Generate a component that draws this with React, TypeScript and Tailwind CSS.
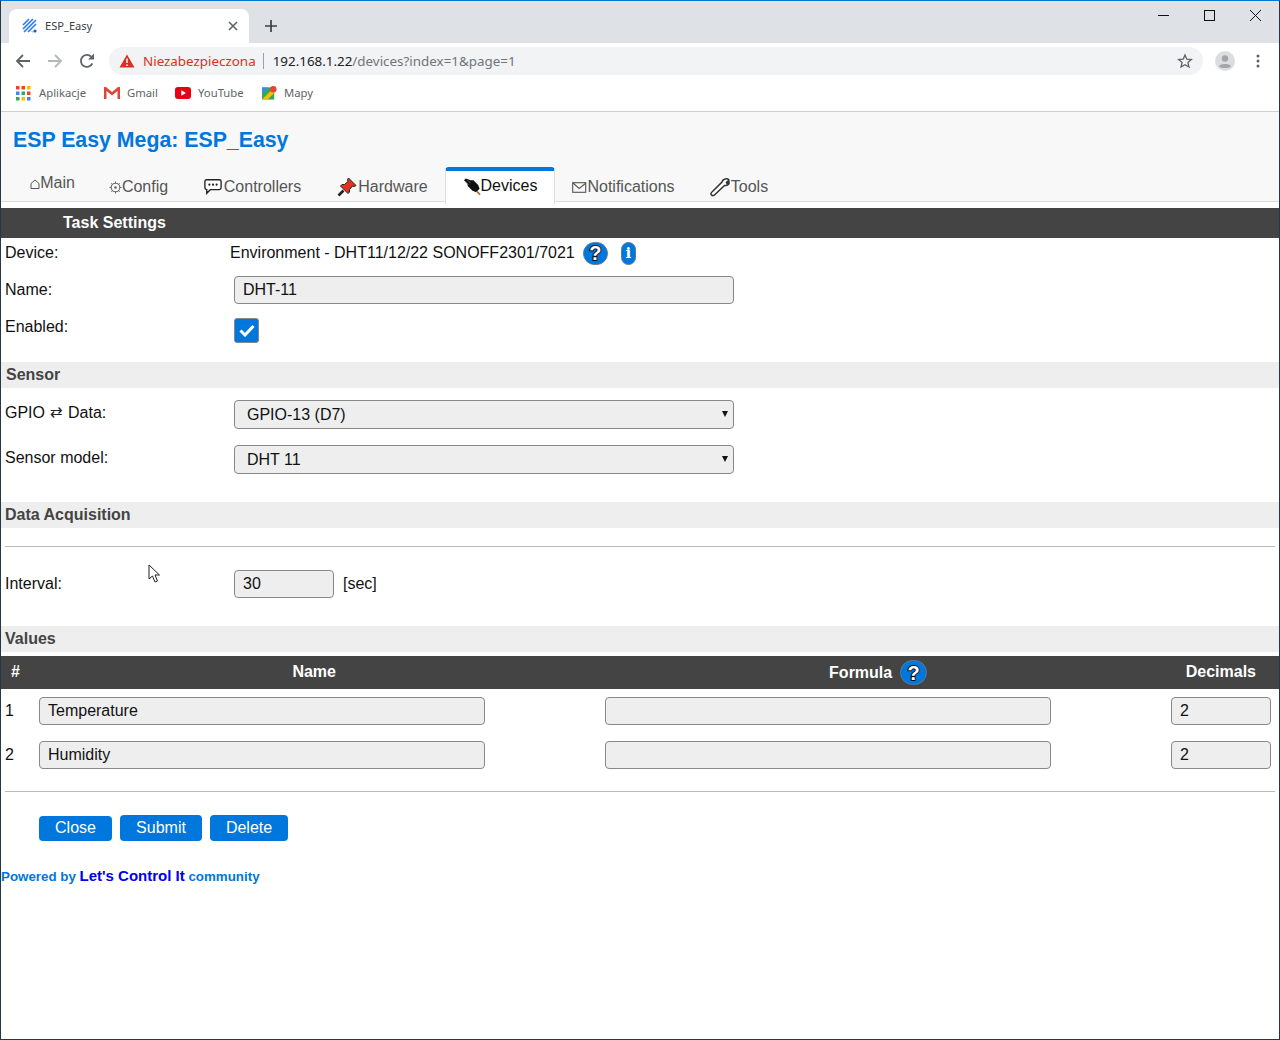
import React from "react";

const Q = ({ size = "w-[25px] h-[23px]", className = "" }: { size?: string; className?: string }) => (
  <span className={`flex items-center justify-center shrink-0 ${size} rounded-full bg-[#0077dd] border border-[#5a7a94] text-white font-bold text-[20px] leading-none ${className}`} style={{ WebkitTextStroke: "2px #111", paintOrder: "stroke fill" }}>?</span>
);

const Field = ({ w, value = "", select = false, h = "h-[29px]", px = "pl-2" }: { w: string; value?: string; select?: boolean; h?: string; px?: string }) => (
  <div className={`${w} ${h} ${px} relative flex items-center shrink-0 rounded-[4px] border border-[#888] bg-[#eeeeee] text-[16px] text-[#111]`}>
    {value}
    {select && <span className="absolute right-[5px] top-[10px] w-0 h-0 border-x-[3px] border-x-transparent border-t-[6px] border-t-[#111]" />}
  </div>
);

const Section = ({ children, pl = "pl-[4px]" }: { children: React.ReactNode; pl?: string }) => (
  <div className={`h-[26px] ${pl} flex items-center bg-[#eeeeee] font-bold text-[16px] text-[#444]`}>{children}</div>
);

const Tab = ({ icon, label, active = false, w, up = false }: { icon: React.ReactNode; label: string; active?: boolean; w: string; up?: boolean }) => {
  const state = active
    ? "mt-[4px] h-[37px] pb-[3px] bg-white text-[#111] border-x border-[#ddd] border-t-[4px] border-t-[#0077dd] rounded-t-[4px] relative z-10"
    : up
      ? "h-[38px] pt-[3px] pb-[2px] text-[#555]"
      : "h-[38px] pt-[9px] text-[#555]";
  return (
    <div className={`${w} ${state} flex items-center justify-center shrink-0 text-[16px]`}>
      <span className="flex items-center">{icon}{label}</span>
    </div>
  );
};

const Bookmark = ({ icon, label, w }: { icon: React.ReactNode; label: string; w: string }) => (
  <div className={`${w} flex items-center gap-[7px] text-[11.3px] text-[#5f6368] shrink-0`}>
    {icon}<span>{label}</span>
  </div>
);

export default function App() {
  return (
    <div className="w-[1280px] h-[1040px] relative flex flex-col bg-white border-x border-b border-x-[#24384a] border-b-[#24384a] border-t border-t-[#0078d4] overflow-hidden" style={{ fontFamily: '"Liberation Sans", Arial, sans-serif' }}>
      {/* tab strip */}
      <div className="h-[42px] shrink-0 bg-[#dee1e6] flex items-end pl-[8px] relative">
        <div className="w-[240px] h-[34px] bg-white rounded-t-[8px] flex items-center pl-[13px] pr-[11px] text-[11.1px] text-[#3c4043]" style={{ fontFamily: '"Noto Sans", sans-serif' }}>
          <svg width="16" height="16" viewBox="0 0 16 16" className="mr-[7px] shrink-0">
            <path d="M1 7 L7 1 M1 11 L11 1 M2 14 L14 2 M6 14 L14 6 M10 14 L10.5 13.5" stroke="#2b7de0" strokeWidth="1.6" fill="none" />
            <circle cx="13" cy="13" r="1.6" fill="#0b5fc6" />
          </svg>
          <span className="flex-1">ESP_Easy</span>
          <svg width="10" height="10" viewBox="0 0 10 10"><path d="M1 1 L9 9 M9 1 L1 9" stroke="#5f6368" strokeWidth="1.6" /></svg>
        </div>
        <svg width="12" height="12" viewBox="0 0 12 12" className="ml-[16px] mb-[11px]"><path d="M6 0 V12 M0 6 H12" stroke="#3c4043" strokeWidth="1.7" /></svg>
        <div className="absolute right-[18px] top-[9px] flex items-center gap-[35px]">
          <svg width="11" height="11" viewBox="0 0 11 11"><path d="M0 5.5 H11" stroke="#111" strokeWidth="1" /></svg>
          <svg width="11" height="11" viewBox="0 0 11 11"><rect x="0.5" y="0.5" width="10" height="10" fill="none" stroke="#111" /></svg>
          <svg width="11" height="11" viewBox="0 0 11 11"><path d="M0 0 L11 11 M11 0 L0 11" stroke="#111" /></svg>
        </div>
      </div>
      {/* toolbar */}
      <div className="h-[36px] shrink-0 flex items-center pl-[14px] pr-[14px]">
        <svg width="16" height="16" viewBox="0 0 16 16" className="shrink-0"><path d="M15 8 H2 M8 2 L2 8 L8 14" fill="none" stroke="#5f6368" strokeWidth="1.8" /></svg>
        <svg width="16" height="16" viewBox="0 0 16 16" className="ml-[16px] shrink-0"><path d="M1 8 H14 M8 2 L14 8 L8 14" fill="none" stroke="#b4b7bb" strokeWidth="1.8" /></svg>
        <svg width="16" height="16" viewBox="0 0 16 16" className="ml-[16px] shrink-0"><path d="M13.3 10.5 A6 6 0 1 1 12.2 3.7" fill="none" stroke="#5f6368" strokeWidth="1.8" /><path d="M9 6.5 H15 V0.5 Z" fill="#5f6368" /></svg>
        <div className="ml-[14px] w-[1094px] h-[28px] rounded-full bg-[#f1f3f4] flex items-center pl-[10px] pr-[10px] text-[13.4px] shrink-0" style={{ fontFamily: '"Noto Sans", sans-serif' }}>
          <svg width="16" height="14" viewBox="0 0 16 14" className="shrink-0"><path d="M8 0.5 L15.5 13.5 H0.5 Z" fill="#d93025" /><path d="M8 4.5 V9 M8 10.5 V12" stroke="#fff" strokeWidth="1.5" /></svg>
          <span className="ml-[8px] pt-px text-[#d93025]">Niezabezpieczona</span>
          <span className="ml-[7px] w-px h-[16px] bg-[#9aa0a6]" />
          <span className="ml-[9px] pt-px text-[#202124]">192.168.1.22<span className="text-[#70757a]">/devices?index=1&amp;page=1</span></span>
          <svg width="16" height="16" viewBox="0 0 24 24" className="ml-auto shrink-0"><path d="M12 3 L14.7 9.3 L21.5 9.9 L16.4 14.4 L17.9 21 L12 17.5 L6.1 21 L7.6 14.4 L2.5 9.9 L9.3 9.3 Z" fill="none" stroke="#5f6368" strokeWidth="2" /></svg>
        </div>
        <div className="ml-[12px] w-[20px] h-[20px] rounded-full bg-[#dcdddf] relative overflow-hidden shrink-0">
          <svg width="20" height="20" viewBox="0 0 20 20"><circle cx="10" cy="7.5" r="3.2" fill="#a3a5a8" /><path d="M4 15.5 C4 12 16 12 16 15.5 C14 17.5 6 17.5 4 15.5 Z" fill="#a3a5a8" /></svg>
        </div>
        <svg width="4" height="14" viewBox="0 0 4 14" className="ml-[21px] shrink-0"><circle cx="2" cy="2" r="1.5" fill="#5f6368" /><circle cx="2" cy="7" r="1.5" fill="#5f6368" /><circle cx="2" cy="12" r="1.5" fill="#5f6368" /></svg>
      </div>
      {/* bookmarks */}
      <div className="h-[33px] shrink-0 flex items-center pl-[15px] pb-[4px] border-b border-b-[#cfcfcf]" style={{ fontFamily: '"Noto Sans", sans-serif' }}>
        <Bookmark w="w-[88px]" label="Aplikacje" icon={
          <svg width="15" height="15" viewBox="0 0 15 15" className="mr-px">
            {[["#ea4335", "#ea4335", "#fbbc04"], ["#4285f4", "#34a853", "#ea4335"], ["#34a853", "#fbbc04", "#4285f4"]].map((row, y) => row.map((c, x) => <rect key={`${x}${y}`} x={x * 5.5} y={y * 5.5} width="3.5" height="3.5" fill={c} />))}
          </svg>} />
        <Bookmark w="w-[71px]" label="Gmail" icon={
          <svg width="16" height="12" viewBox="0 0 16 12"><path d="M0 0 H2 L8 5 L14 0 H16 V12 H13.5 V4 L8 8.5 L2.5 4 V12 H0 Z" fill="#d9473d" /></svg>} />
        <Bookmark w="w-[87px]" label="YouTube" icon={
          <svg width="16" height="12" viewBox="0 0 16 12"><rect width="16" height="12" rx="3" fill="#e60012" /><path d="M6.3 3.3 L11 6 L6.3 8.7 Z" fill="#fff" /></svg>} />
        <Bookmark w="w-[70px]" label="Mapy" icon={
          <svg width="15" height="16" viewBox="0 0 16 16"><rect y="2" width="13" height="13" fill="#34a853" /><path d="M0 15 L13 2 V8 L6 15 Z" fill="#fbbc04" /><path d="M0 2 H7 L0 9 Z" fill="#4285f4" /><circle cx="12" cy="4" r="3.5" fill="#ea4335" /></svg>} />
      </div>
      {/* page header */}
      <div className="h-[90px] shrink-0 bg-[#f8f8f8] relative flex flex-col">
        <h1 className="pl-[12px] pt-[16px] h-[51px] text-[21.3px] leading-[25px] font-bold text-[#0077dd] shrink-0">ESP Easy Mega: ESP_Easy</h1>
        <div className="h-[39px] flex border-b border-b-[#dddddd] pl-[12px] text-[#555]">
          <Tab w="w-[79px]" up label="Main" icon={
            <svg width="10" height="10" viewBox="0 0 10 10" className="mt-[3px]"><path d="M1 9.5 V4.5 L5 1 L9 4.5 V9.5 Z" fill="none" stroke="#555" /></svg>} />
          <Tab w="w-[93px]" label="Config" icon={
            <svg width="13" height="13" viewBox="0 0 13 13" className="mt-px"><circle cx="6.5" cy="6.5" r="4.3" fill="none" stroke="#666" strokeWidth="1.1" /><circle cx="6.5" cy="6.5" r="1.3" fill="#666" /><path d="M6.5 0.5 V2 M6.5 11 V12.5 M0.5 6.5 H2 M11 6.5 H12.5 M2.3 2.3 L3.3 3.3 M9.7 9.7 L10.7 10.7 M10.7 2.3 L9.7 3.3 M3.3 9.7 L2.3 10.7" stroke="#666" /></svg>} />
          <Tab w="w-[135px]" label="Controllers" icon={
            <svg width="18" height="17" viewBox="0 0 20 17" className="mr-[2px]"><path d="M3 1 H17 Q19 1 19 3 V10 Q19 12 17 12 H7 L3 16 V12 Q1 12 1 10 V3 Q1 1 3 1 Z" fill="#fff" stroke="#222" strokeWidth="1.5" /><circle cx="6" cy="6.5" r="1.2" fill="#222" /><circle cx="10" cy="6.5" r="1.2" fill="#222" /><circle cx="14" cy="6.5" r="1.2" fill="#222" /></svg>} />
          <Tab w="w-[125px]" label="Hardware" icon={
            <svg width="20" height="20" viewBox="0 0 20 20" className="mr-px"><path d="M11.5 1 L19 8.5 L17 9.5 L15.5 9 L12.5 12.5 L12.5 15 L11 16.5 L3.5 9 L5 7.5 L7.5 7.5 L11 4.5 L10.5 2.5 Z" fill="#e0331f" stroke="#222" strokeWidth="1" /><path d="M6.5 13.5 L1.5 18.5" stroke="#222" strokeWidth="2.6" /></svg>} />
          <Tab w="w-[110px]" active label="Devices" icon={
            <svg width="18" height="19" viewBox="0 0 19 19"><path d="M1 3 L3 1 L8 3 L11 3 L16 8 L17.5 12 L14 15.5 L10 14 L5 9 L4.5 6 Z" fill="#111" /><path d="M5 3 L8 6 M3 5 L6 8" stroke="#777" strokeWidth="0.8" /><path d="M14.5 14.5 L18 18" stroke="#b56a20" strokeWidth="1.8" /></svg>} />
          <Tab w="w-[137px]" label="Notifications" icon={
            <svg width="15" height="11" viewBox="0 0 15 11" className="mt-px"><rect x="0.7" y="0.7" width="13" height="9.6" fill="none" stroke="#555" strokeWidth="1.1" /><path d="M1 1 L7.2 6.5 L14 1" fill="none" stroke="#555" strokeWidth="1.1" /></svg>} />
          <Tab w="w-[94px]" label="Tools" icon={
            <svg width="20" height="20" viewBox="0 0 20 20" className="mr-px"><path d="M14 2.5 Q17 1 19 3 L16.5 5.5 L17 6.5 L19 5 Q19.5 8 16 8.5 L14.5 8.5 L5 17.5 Q3 19.5 1.5 18 Q0 16.5 2.5 14.5 L12 5 Q12.5 3 14 2.5 Z" fill="#fff" stroke="#333" strokeWidth="1.5" /></svg>} />
        </div>
      </div>
      {/* form */}
      <div className="flex flex-col text-[16px] text-[#111]">
        <div className="mt-[6px] h-[30px] bg-[#444444] text-white font-bold flex items-center pl-[62px]">Task Settings</div>
        <div className="h-[30px] flex items-center">
          <span className="pl-[4px] w-[229px]">Device:</span>
          <span>Environment - DHT11/12/22 SONOFF2301/7021</span>
          <Q className="ml-[8px]" />
          <span className="ml-[13px] w-[15px] h-[23px] rounded-[8px] bg-[#0077dd] border border-[#5a7a94] text-white font-bold text-[15px] flex items-center justify-center" style={{ fontFamily: '"DejaVu Serif", serif' }}>i</span>
        </div>
        <div className="h-[44px] flex items-center">
          <span className="pl-[4px] w-[233px] pb-[1px]">Name:</span>
          <Field w="w-[500px]" value="DHT-11" h="h-[28px]" />
        </div>
        <div className="h-[50px] flex items-start">
          <span className="pl-[4px] w-[233px] pt-[3px]">Enabled:</span>
          <span className="mt-[6px] w-[25px] h-[25px] rounded-[3px] bg-[#0077dd] border border-[#888] flex items-center justify-center">
            <svg width="16" height="13" viewBox="0 0 16 13"><path d="M1.5 6.5 L6 11 L14.5 2" fill="none" stroke="#fff" strokeWidth="3" /></svg>
          </span>
        </div>
        <Section pl="pl-[5px]">Sensor</Section>
        <div className="h-[12px]" />
        <div className="h-[29px] flex items-center">
          <span className="pl-[4px] w-[233px] pb-[4px] flex items-center">GPIO <span className="mx-[5px] text-[15px] text-[#222]">⇄</span> Data:</span>
          <Field w="w-[500px]" value="GPIO-13 (D7)" select px="pl-[12px]" />
        </div>
        <div className="h-[16px]" />
        <div className="h-[29px] flex items-center">
          <span className="pl-[4px] w-[233px] pb-[3px]">Sensor model:</span>
          <Field w="w-[500px]" value="DHT 11" select px="pl-[12px]" />
        </div>
        <div className="h-[28px]" />
        <Section>Data Acquisition</Section>
        <div className="h-[18px]" />
        <div className="h-px mx-[4px] bg-[#bbbbbb]" />
        <div className="h-[23px]" />
        <div className="h-[28px] flex items-center">
          <span className="pl-[4px] w-[233px]">Interval:</span>
          <Field w="w-[100px]" value="30" h="h-[28px]" />
          <span className="ml-[8px] pl-px">[sec]</span>
        </div>
        <div className="h-[28px]" />
        <Section>Values</Section>
        <div className="h-[4px]" />
        <div className="h-[33px] bg-[#444444] text-white font-bold flex items-center">
          <span className="w-[32px] pl-[10px] pb-[2px]">#</span>
          <span className="w-[563px] text-center pb-[2px] pl-[2px]">Name</span>
          <span className="w-[474px] flex items-center justify-center gap-[8px] pl-[97px]">Formula <Q size="w-[27px] h-[25px]" /></span>
          <span className="w-[214px] pb-[2px] text-right pr-[23px] whitespace-nowrap">Decimals</span>
        </div>
        <div className="h-[8px]" />
        <div className="h-[28px] flex items-center">
          <span className="pl-[4px] w-[38px]">1</span>
          <Field w="w-[446px]" value="Temperature" h="h-[28px]" />
          <span className="w-[120px]" />
          <Field w="w-[446px]" h="h-[28px]" />
          <span className="w-[120px]" />
          <Field w="w-[100px]" value="2" h="h-[28px]" />
        </div>
        <div className="h-[16px]" />
        <div className="h-[28px] flex items-center">
          <span className="pl-[4px] w-[38px]">2</span>
          <Field w="w-[446px]" value="Humidity" h="h-[28px]" />
          <span className="w-[120px]" />
          <Field w="w-[446px]" h="h-[28px]" />
          <span className="w-[120px]" />
          <Field w="w-[100px]" value="2" h="h-[28px]" />
        </div>
        <div className="h-[22px]" />
        <div className="h-px mx-[4px] bg-[#bbbbbb]" />
        <div className="h-[23px]" />
        <div className="flex items-center pl-[38px] gap-[8px] text-white">
          <span className="w-[73px] h-[25px] rounded-[4px] bg-[#0077dd] flex items-center justify-center">Close</span>
          <span className="w-[82px] h-[26px] rounded-[4px] bg-[#0077dd] flex items-center justify-center">Submit</span>
          <span className="w-[78px] h-[26px] rounded-[4px] bg-[#0077dd] flex items-center justify-center">Delete</span>
        </div>
        <div className="mt-[24px] flex items-baseline font-bold text-[13.33px] text-[#0077dd]">
          Powered by&nbsp;<span className="text-[#0000ee] text-[15px]">Let's Control It</span>&nbsp;community
        </div>
      </div>
      <svg width="14" height="20" viewBox="0 0 14 20" className="absolute left-[147px] top-[563px]"><path d="M1 1 V15 L4.5 12 L7 18 L9.5 17 L7 11 L11.5 11 Z" fill="#fff" stroke="#222" strokeWidth="1" /></svg>
    </div>
  );
}
